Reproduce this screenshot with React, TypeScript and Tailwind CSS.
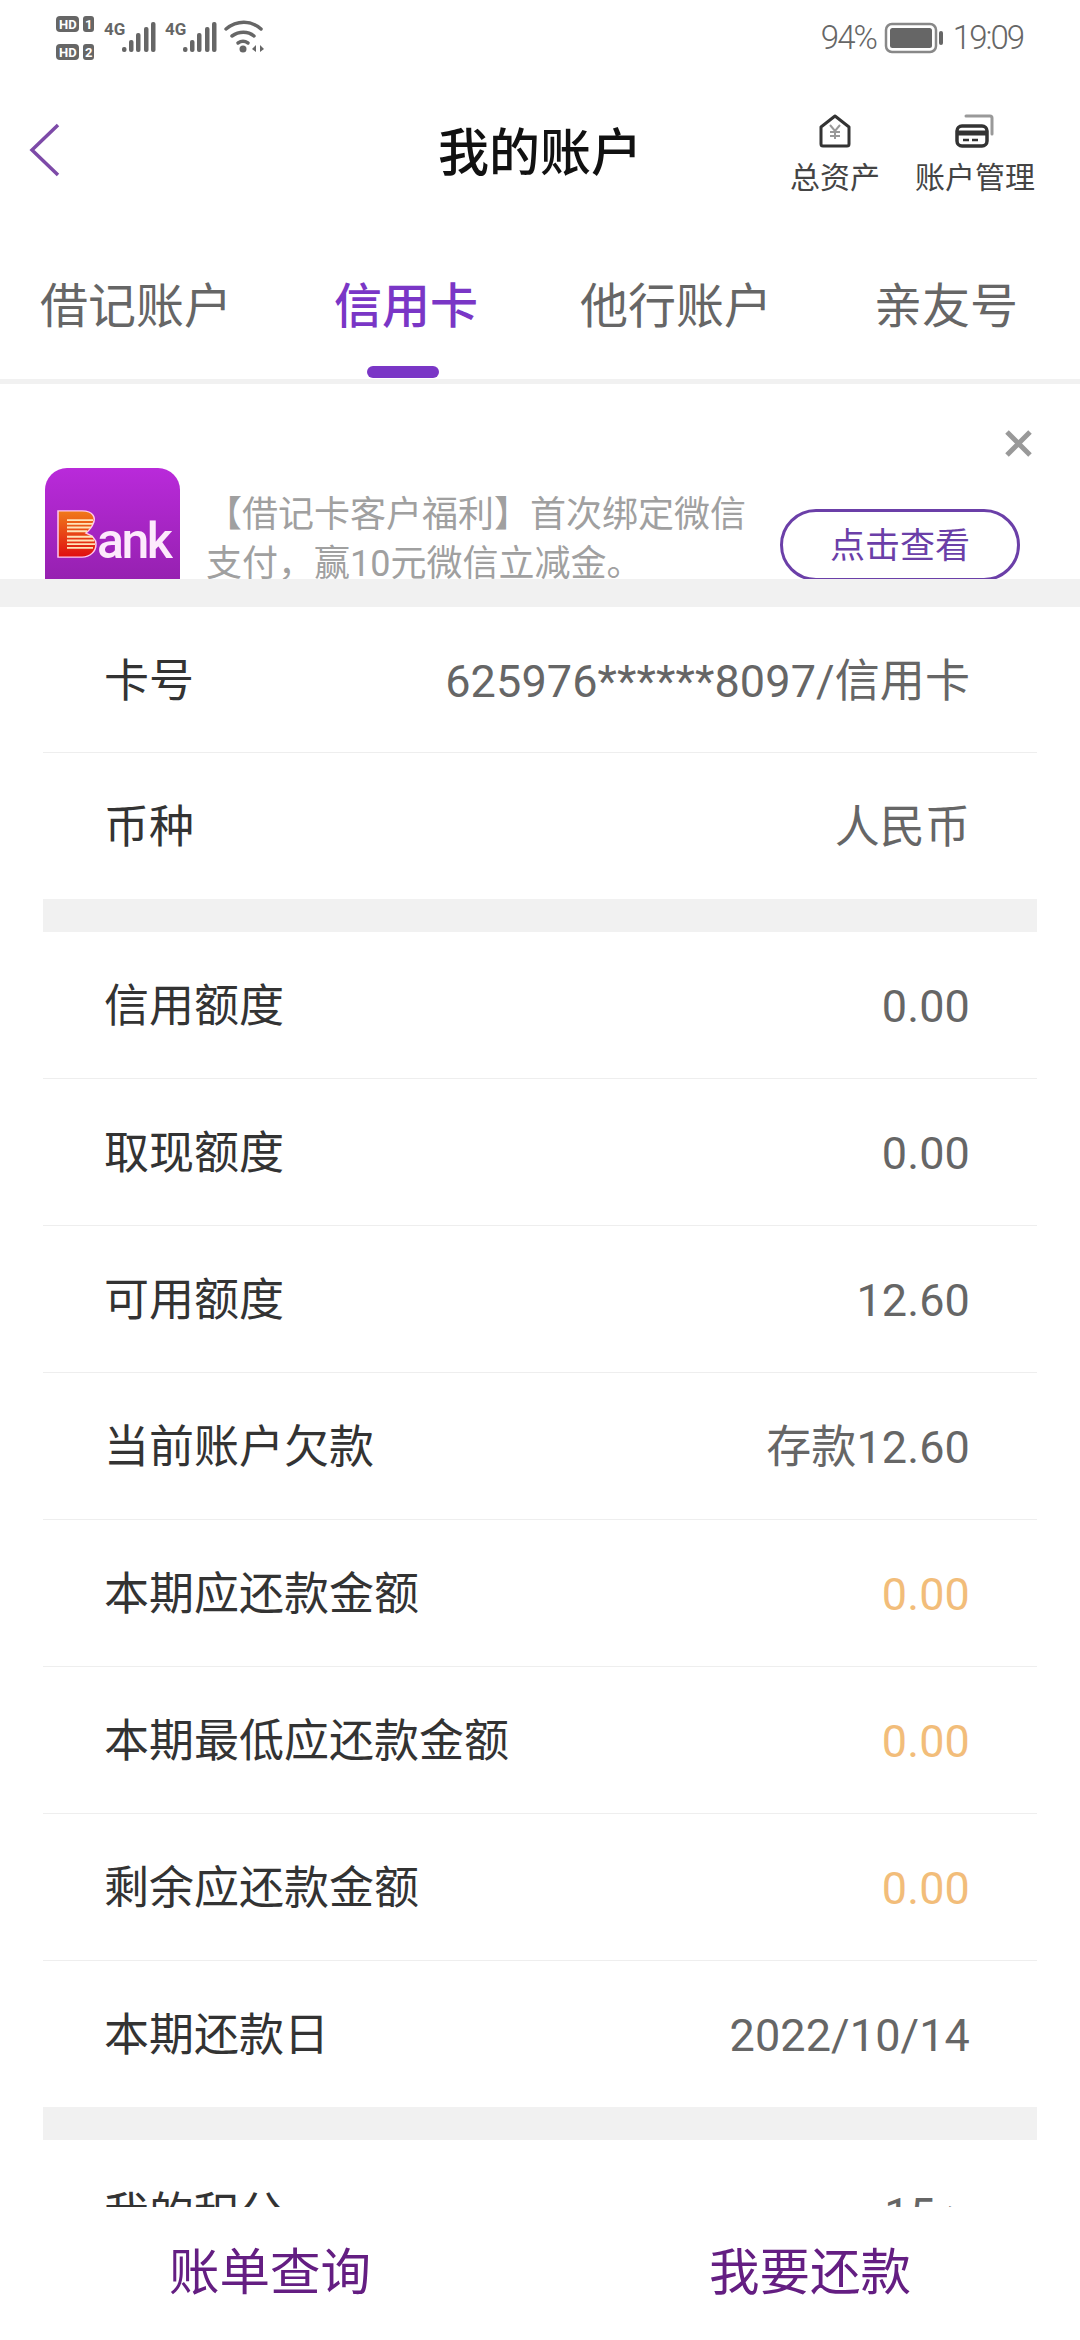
const FONT = "font-['Roboto','Noto_Sans_CJK_SC',sans-serif]";

const TABS = [
  { label: '借记账户', active: false },
  { label: '信用卡', active: true },
  { label: '他行账户', active: false },
  { label: '亲友号', active: false },
];

const CREDIT_ROWS = [
  { label: '信用额度', value: '0.00' },
  { label: '取现额度', value: '0.00' },
  { label: '可用额度', value: '12.60' },
  { label: '当前账户欠款', value: '存款12.60' },
  { label: '本期应还款金额', value: '0.00', warn: true },
  { label: '本期最低应还款金额', value: '0.00', warn: true },
  { label: '剩余应还款金额', value: '0.00', warn: true },
  { label: '本期还款日', value: '2022/10/14', last: true },
];

function Row({ label, value, warn, last, first }: { label: string; value: string; warn?: boolean; last?: boolean; first?: boolean }) {
  return (
    <div className={`flex items-center justify-between pl-[61px] pr-[67px] pt-[3px] ${first || last ? 'h-[146px]' : 'h-[147px]'} ${last ? '' : 'border-b border-[#eeeeee]'}`}>
      <span className="text-[45px] leading-none text-[#333333]">{label}</span>
      <span className={`text-[45px] leading-none tracking-[0.1px] ${warn ? 'text-[#f2bd7a]' : 'text-[#666666]'}`}>{value}</span>
    </div>
  );
}

function Signal({ x }: { x: number }) {
  return (
    <g transform={`translate(${x} 0)`} fill="#666666">
      <text x="0" y="35" fontSize="17" fontWeight="700" fontFamily="Roboto">4G</text>
      <rect x="18" y="47" width="4.5" height="5" rx="2" />
      <rect x="25" y="40" width="4.5" height="12" rx="2" />
      <rect x="32" y="33" width="4.5" height="19" rx="2" />
      <rect x="40" y="27" width="4.5" height="25" rx="2" />
      <rect x="47" y="22" width="4.5" height="30" rx="2" />
    </g>
  );
}

function StatusIcons() {
  return (
    <svg width="290" height="64" viewBox="0 0 290 64">
      <rect x="56" y="16" width="23" height="16" rx="4" fill="#666666" />
      <text x="59" y="29" fontSize="13" fontWeight="700" fontFamily="Roboto" fill="#ffffff">HD</text>
      <rect x="83" y="16" width="11" height="16" rx="3" fill="#666666" />
      <text x="85" y="29" fontSize="13" fontWeight="700" fontFamily="Roboto" fill="#ffffff">1</text>
      <rect x="56" y="44" width="23" height="16" rx="4" fill="#666666" />
      <text x="59" y="57" fontSize="13" fontWeight="700" fontFamily="Roboto" fill="#ffffff">HD</text>
      <rect x="83" y="44" width="11" height="16" rx="3" fill="#666666" />
      <text x="85" y="57" fontSize="13" fontWeight="700" fontFamily="Roboto" fill="#ffffff">2</text>
      <Signal x={104} />
      <Signal x={165} />
      <g fill="none" stroke="#666666" strokeWidth="3.5" strokeLinecap="round">
        <path d="M226 29c11-9 25-9 35 0" />
        <path d="M232 36c7-5 16-5 22 0" />
        <path d="M238 43c3-2 7-2 10 0" />
      </g>
      <circle cx="243" cy="49" r="3.5" fill="#666666" />
      <path d="M256 45l-4 4 4 3zM260 45l4 4-4 3z" fill="#666666" />
    </svg>
  );
}

function BankLogo() {
  return (
    <div className="h-[135px] w-[135px] shrink-0 rounded-t-[22px] bg-gradient-to-b from-[#b92ada] to-[#8f1fa8] pt-[42px] pl-[12px]">
      <div className="flex items-end">
        <svg width="40" height="48" viewBox="0 0 40 52" preserveAspectRatio="none">
          <defs>
            <linearGradient id="bankB" x1="0" y1="0" x2="0" y2="1">
              <stop offset="0" stopColor="#f07a1a" />
              <stop offset="1" stopColor="#e00e10" />
            </linearGradient>
          </defs>
          <path d="M1 1h24c12 0 14 8 11 14-1 4-5 8-7 10 5 2 10 6 10 12 0 8-6 14-14 14H1z" fill="url(#bankB)" stroke="#ffc8ee" strokeWidth="1.5" />
          <g stroke="#ffe3b8" strokeWidth="2">
            <path d="M10 11h26M10 15h26M10 19h24M10 23h20M10 29h26M10 33h27M10 37h28M10 41h26" />
          </g>
        </svg>
        <span className="mb-[-7px] text-[50px] leading-[48px] font-medium tracking-[-2.5px] text-[#fdeafc]">ank</span>
      </div>
    </div>
  );
}

export default function App() {
  return (
    <div className={`flex h-[2340px] w-[1080px] flex-col overflow-hidden bg-white ${FONT}`}>
      {/* status bar */}
      <div className="flex h-[76px] shrink-0 items-start justify-between pr-[57px] text-[33px] text-[#666666]">
        <StatusIcons />
        <div className="flex items-center pt-[16px] leading-[44px] font-light">
          <span className="tracking-[-2px]">94%</span>
          <svg className="ml-[8px] mr-[9px]" width="60" height="32" viewBox="0 0 60 32">
            <rect x="2" y="2" width="50" height="28" rx="6" fill="none" stroke="#888888" strokeWidth="2.5" />
            <rect x="6" y="6" width="42" height="20" rx="2.5" fill="#666666" />
            <rect x="55" y="9" width="4" height="14" rx="2" fill="#666666" />
          </svg>
          <span className="tracking-[-2px]">19:09</span>
        </div>
      </div>

      {/* header */}
      <div className="relative flex h-[150px] shrink-0 items-center justify-center">
        <svg className="absolute left-[28px] top-[46px]" width="34" height="56" viewBox="0 0 34 56" fill="none" stroke="#7d4aa8" strokeWidth="3.5">
          <path d="M30 3 4 28l26 25" />
        </svg>
        <span className="pt-[5px] text-[51px] font-medium leading-none text-[#111111]">我的账户</span>
        <div className="absolute left-[791px] top-[38px] flex w-[88px] flex-col items-center">
          <svg width="34" height="34" viewBox="0 0 34 34" fill="none">
            <path d="M3 13 17 2l14 11v17a2 2 0 0 1-2 2H5a2 2 0 0 1-2-2z" stroke="#333333" strokeWidth="3" strokeLinejoin="round" />
            <path d="M12 11l5 6 5-6M17 17v8M12 18h10M12 22h10" stroke="#999999" strokeWidth="2" />
          </svg>
          <span className="mt-[13px] whitespace-nowrap text-[30px] leading-[34px] text-[#444444]">总资产</span>
        </div>
        <div className="absolute left-[915px] top-[38px] flex w-[120px] flex-col items-center">
          <svg width="40" height="34" viewBox="0 0 40 34" fill="none">
            <path d="M11 2h24a2 2 0 0 1 2 2v16" stroke="#999999" strokeWidth="3" strokeLinecap="round" />
            <rect x="2" y="12" width="30" height="20" rx="5" stroke="#333333" strokeWidth="3.5" />
            <path d="M3 19h28" stroke="#333333" strokeWidth="5" />
            <path d="M8 26h6M17 26h6" stroke="#333333" strokeWidth="2.5" />
          </svg>
          <span className="mt-[13px] whitespace-nowrap text-[30px] leading-[34px] text-[#444444]">账户管理</span>
        </div>
      </div>

      {/* tabs */}
      <div className="flex h-[158px] shrink-0 justify-between border-b-[5px] border-[#f1f1f1] pl-[40px] pr-[62px]">
        {TABS.map(t => (
          <div key={t.label} className="relative flex h-full items-start pt-[57px]">
            <span className={`text-[48px] leading-none ${t.active ? 'font-medium text-[#7a36c6]' : 'text-[#666666]'}`}>{t.label}</span>
            {t.active && <div className="absolute bottom-[1px] left-[33px] h-[12px] w-[72px] rounded-full bg-[#7a36c6]" />}
          </div>
        ))}
      </div>

      {/* banner, cut off by the list below */}
      <div className="relative flex h-[195px] shrink-0 items-start overflow-hidden">
        <button className="absolute left-[1005px] top-[46px]">
          <svg className="block" width="27" height="27" viewBox="0 0 27 27" stroke="#999999" strokeWidth="5">
            <path d="M2 2l23 23M25 2 2 25" />
          </svg>
        </button>
        <div className="ml-[45px] mt-[84px]">
          <BankLogo />
        </div>
        <p className="ml-[26px] mt-[107px] w-[545px] shrink-0 text-[36px] leading-[49px] text-[#a0a0a0]">
          【借记卡客户福利】首次绑定微信支付，赢10元微信立减金。
        </p>
        <div className="absolute left-[780px] top-[125px] flex h-[72px] w-[240px] items-center justify-center rounded-full border-[3px] border-[#6b3fa8] pt-[3px] text-[35px] leading-none text-[#6b3fa8]">
          点击查看
        </div>
      </div>
      <div className="h-[28px] shrink-0 bg-[#f1f1f1]" />

      {/* detail list */}
      <div className="min-h-0 flex-1 overflow-hidden px-[43px]">
        <Row first label="卡号" value="625976******8097/信用卡" />
        <Row last label="币种" value="人民币" />
        <div className="h-[33px] bg-[#f1f1f1]" />
        {CREDIT_ROWS.map(r => <Row key={r.label} {...r} />)}
        <div className="h-[33px] bg-[#f1f1f1]" />
        <Row label="我的积分" value="15 >" />
      </div>

      {/* bottom actions */}
      <div className="flex h-[133px] shrink-0 items-start bg-white pt-[41px] text-[50.5px] leading-none text-[#641e82]">
        <span className="ml-[169px]">账单查询</span>
        <span className="ml-[338px]">我要还款</span>
      </div>
    </div>
  );
}
